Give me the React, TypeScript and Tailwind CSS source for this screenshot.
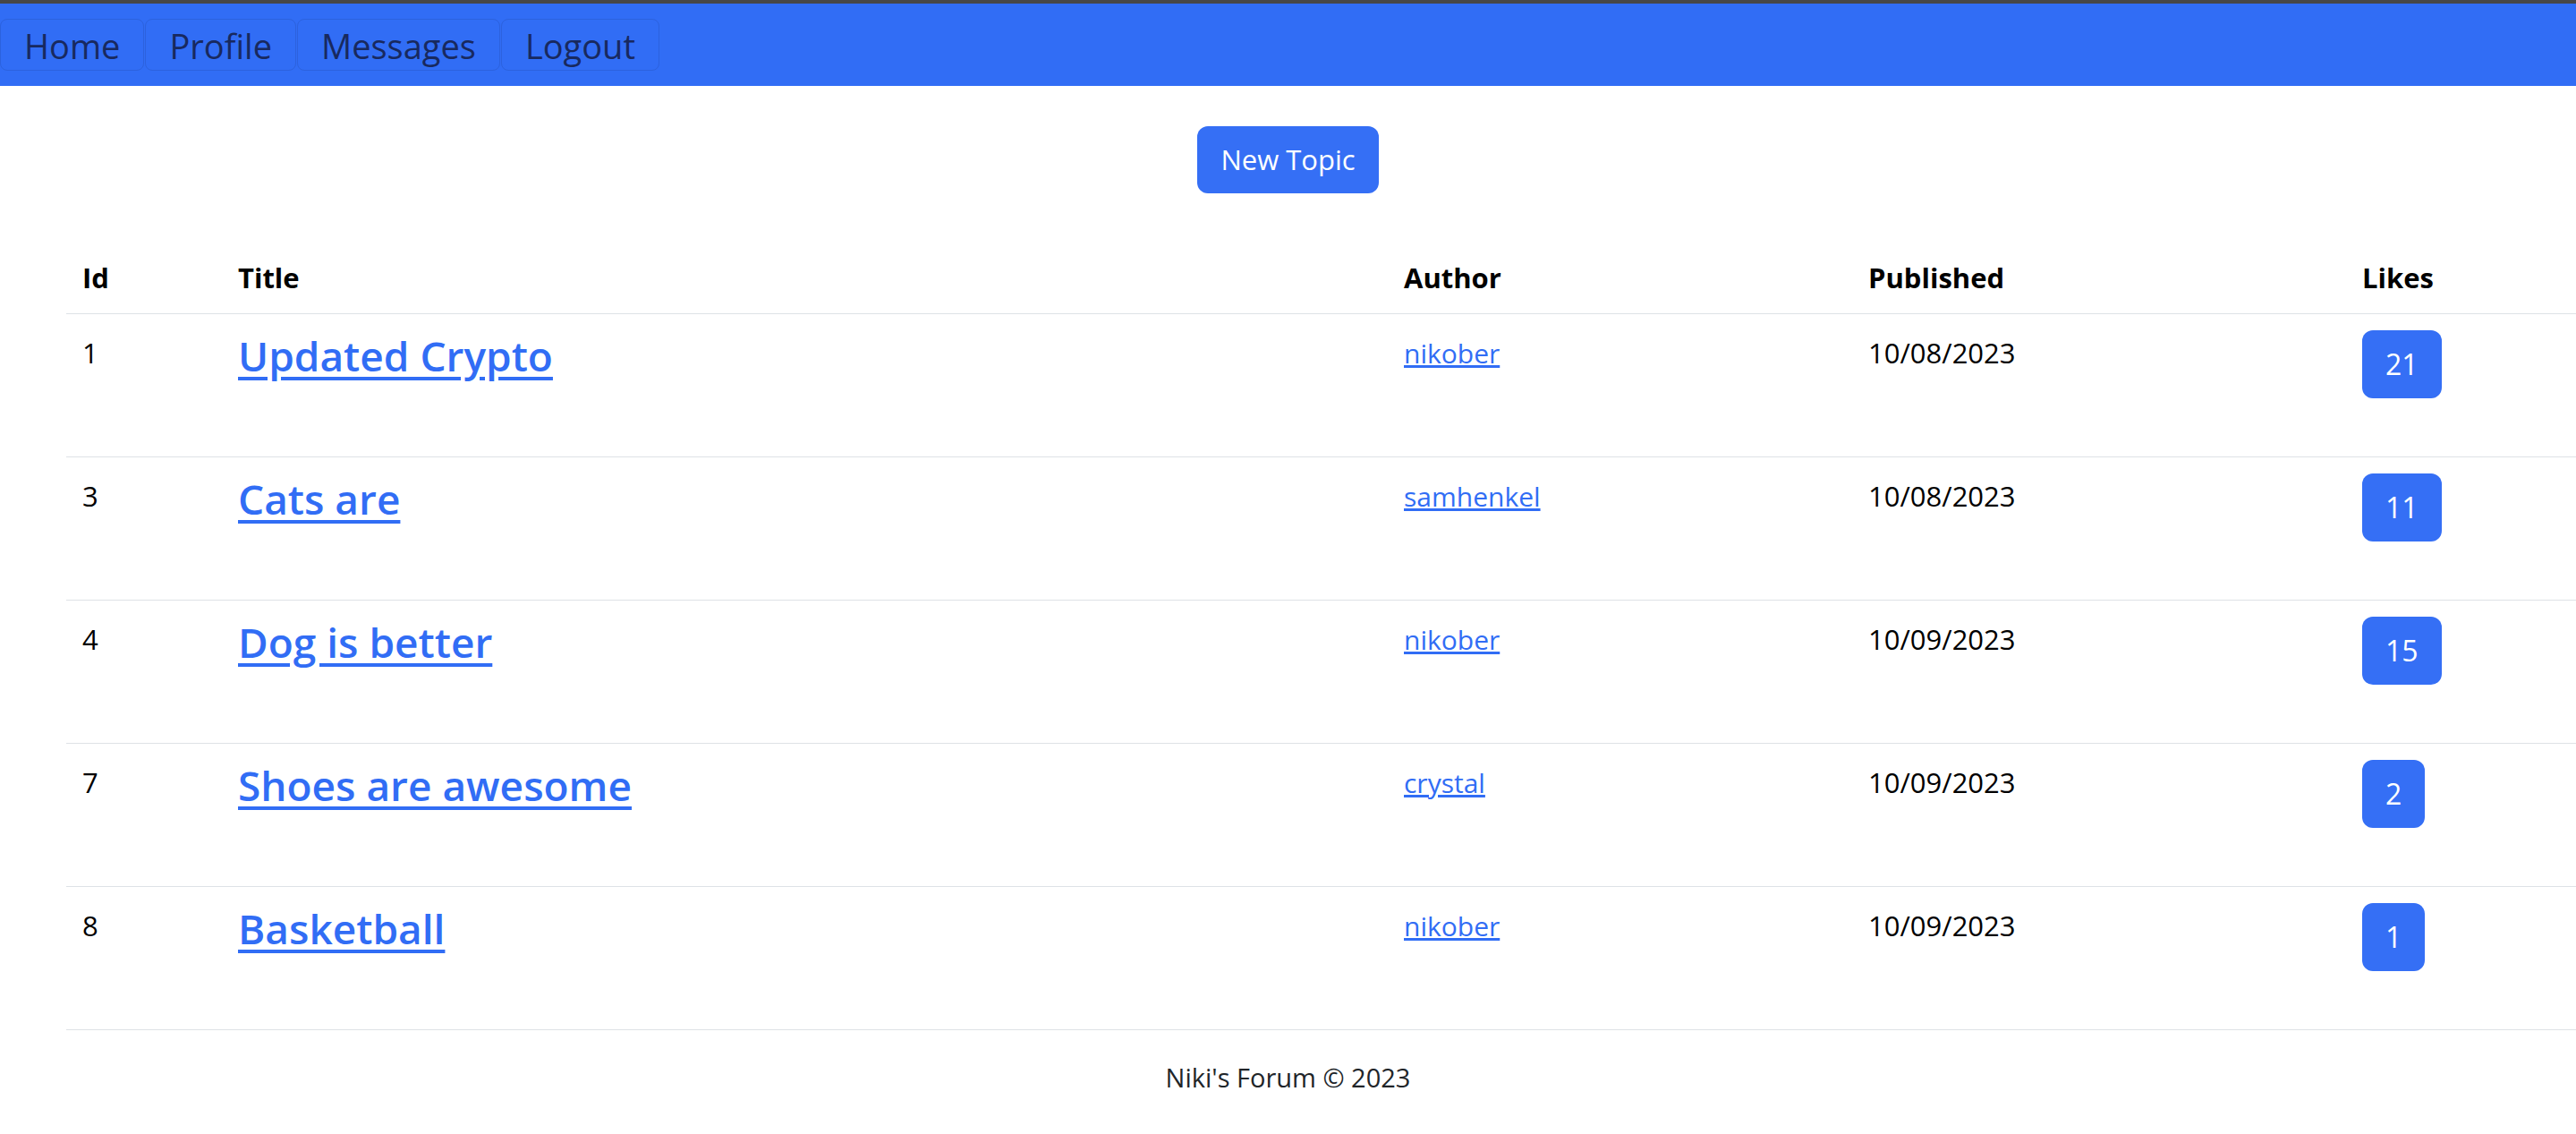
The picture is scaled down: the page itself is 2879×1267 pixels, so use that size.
import React from 'react';

interface Topic {
  id: number;
  title: string;
  author: string;
  published: string;
  likes: number;
}

const topics: Topic[] = [
  { id: 1, title: 'Updated Crypto', author: 'nikober', published: '10/08/2023', likes: 21 },
  { id: 3, title: 'Cats are', author: 'samhenkel', published: '10/08/2023', likes: 11 },
  { id: 4, title: 'Dog is better', author: 'nikober', published: '10/09/2023', likes: 15 },
  { id: 7, title: 'Shoes are awesome', author: 'crystal', published: '10/09/2023', likes: 2 },
  { id: 8, title: 'Basketball', author: 'nikober', published: '10/09/2023', likes: 1 },
];

const navLinks = ['Home', 'Profile', 'Messages', 'Logout'];

const cols = 'grid grid-cols-[174px_1303px_519px_552px_1fr]';

const App = () => {
  return (
    <div className="min-h-[1267px] bg-white font-['Open_Sans',sans-serif] text-black">
      {/* Top nav */}
      <div className="border-t-4 border-[#474747] bg-[#316df5]">
        <nav className="flex gap-[1px] py-[17px]">
          {navLinks.map((link) => (
            <a
              key={link}
              href="#"
              className="flex h-[58px] items-center rounded-lg border border-[#2c62de] px-[26px] pt-[3px] text-[38px] text-[#18295f]"
            >
              {link}
            </a>
          ))}
        </nav>
      </div>

      {/* New topic */}
      <div className="flex justify-center pt-[45px]">
        <button className="flex h-[75px] items-center rounded-xl bg-[#356ff5] px-[26px] text-[31px] text-white">
          New Topic
        </button>
      </div>

      {/* Topics table */}
      <div className="pl-[74px] pt-[71px]">
        <div className={`${cols} border-b border-[#dee2e6] pb-[16px] pl-[18px] text-[31px] font-bold leading-[1.5]`}>
          <div>Id</div>
          <div>Title</div>
          <div>Author</div>
          <div>Published</div>
          <div>Likes</div>
        </div>

        {topics.map((topic) => (
          <div
            key={topic.id}
            className={`${cols} h-[160px] items-start border-b border-[#dee2e6] pl-[18px] pt-[18px] text-[31px] leading-[1.5]`}
          >
            <div className="pt-[2px]">{topic.id}</div>
            <div className="pt-[1px]">
              <a href="#" className="text-[46px] font-semibold leading-[1.2] text-[#316df5] underline underline-offset-[6px]">
                {topic.title}
              </a>
            </div>
            <div className="pt-[2px]">
              <a href="#" className="text-[30px] text-[#316df5] underline">
                {topic.author}
              </a>
            </div>
            <div className="pt-[2px]">{topic.published}</div>
            <div>
              <span className="inline-flex h-[76px] items-center rounded-xl bg-[#356ff5] px-[26px] text-[32px] text-white">
                {topic.likes}
              </span>
            </div>
          </div>
        ))}
      </div>

      {/* Footer */}
      <footer className="pt-[31px] text-center text-[29px] leading-[1.5] text-[#212529]">
        Niki&apos;s Forum &copy; 2023
      </footer>
    </div>
  );
};

export default App;
